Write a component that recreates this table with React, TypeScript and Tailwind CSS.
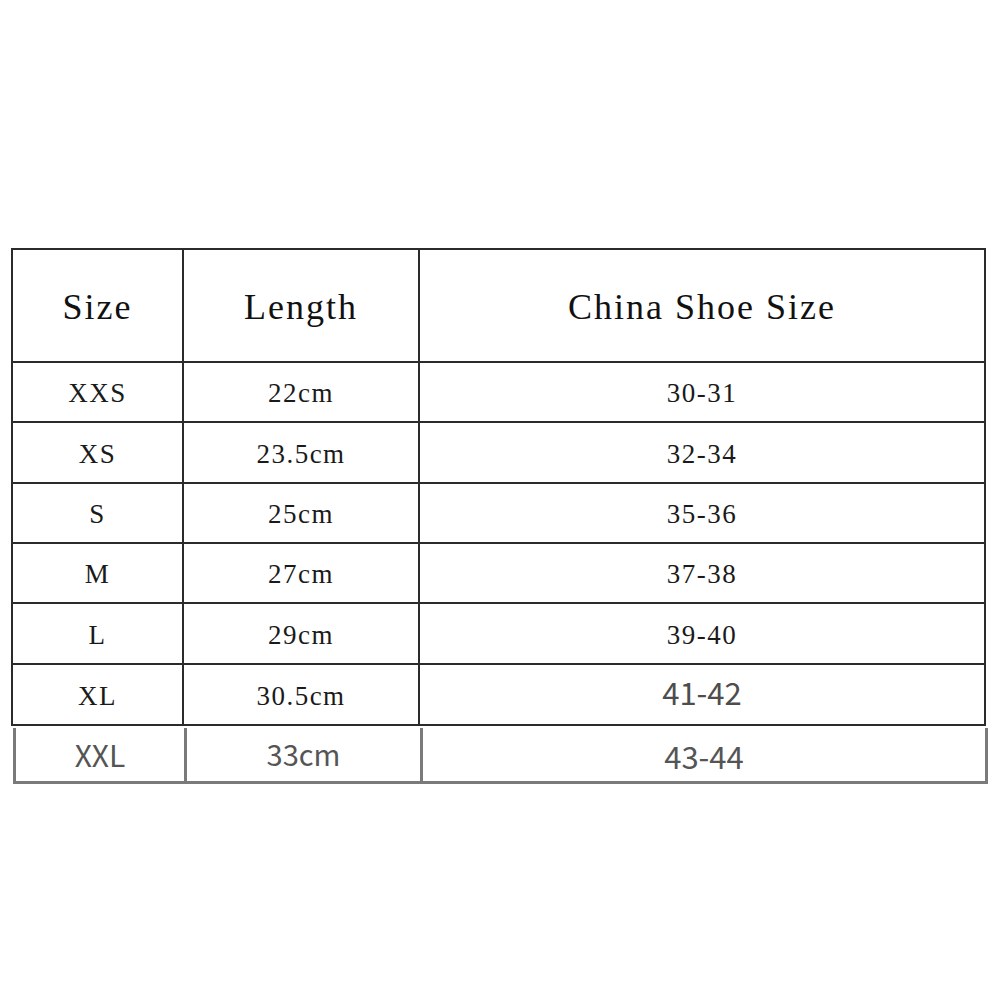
import React from 'react';

type Row = { size: string; length: string; shoe: string; shoeSans?: boolean };

const rows: Row[] = [
    { size: 'XXS', length: '22cm', shoe: '30-31' },
    { size: 'XS', length: '23.5cm', shoe: '32-34' },
    { size: 'S', length: '25cm', shoe: '35-36' },
    { size: 'M', length: '27cm', shoe: '37-38' },
    { size: 'L', length: '29cm', shoe: '39-40' },
    { size: 'XL', length: '30.5cm', shoe: '41-42', shoeSans: true },
];

const heights = ['h-[58px]', 'h-[59px]', 'h-[58px]', 'h-[58px]', 'h-[59px]', 'h-[59px]'];

const serif = "font-['Liberation_Serif','Times_New_Roman',serif]";
const sans = "font-['Noto_Sans_CJK_SC','Noto_Sans',sans-serif]";

export default function App() {
    return (
        <div className="w-[1001px] h-[1001px] bg-white pt-[248px] pl-[11px]">
            {/* main table, dark lines */}
            <div className="w-[975px] border-2 border-[#2b2b2b] flex flex-col">
                <div className={`flex h-[113px] border-b-2 border-[#2b2b2b] text-[36px] tracking-[2px] text-[#111] ${serif}`}>
                    <div className="w-[171px] border-r-2 border-[#2b2b2b] flex items-center justify-center pt-[3px]">Size</div>
                    <div className="w-[236px] border-r-2 border-[#2b2b2b] flex items-center justify-center pt-[3px]">Length</div>
                    <div className="flex-1 flex items-center justify-center pt-[3px]">China Shoe Size</div>
                </div>

                {rows.map((r, i) => (
                    <div
                        key={r.size}
                        className={`flex ${heights[i]} ${i < rows.length - 1 ? 'border-b-2 box-content' : ''} border-[#2b2b2b] text-[#1a1a1a]`}
                    >
                        <div className={`w-[171px] border-r-2 border-[#2b2b2b] flex items-center justify-center pt-[3px] text-[27px] tracking-[1.5px] ${serif}`}>
                            {r.size}
                        </div>
                        <div className={`w-[236px] border-r-2 border-[#2b2b2b] flex items-center justify-center pt-[3px] text-[27px] tracking-[1.5px] ${serif}`}>
                            {r.length}
                        </div>
                        {r.shoeSans ? (
                            <div className={`flex-1 flex items-center justify-center text-[31px] text-[#4d4d4d] pb-[4px] ${sans}`}>
                                {r.shoe}
                            </div>
                        ) : (
                            <div className={`flex-1 flex items-center justify-center pt-[3px] text-[27px] tracking-[1.5px] ${serif}`}>
                                {r.shoe}
                            </div>
                        )}
                    </div>
                ))}
            </div>

            {/* last row, grey lines */}
            <div className={`ml-[2px] mt-[2px] w-[975px] h-[56px] flex border-x-[3px] border-b-[3px] border-[#7a7a7a] text-[#555] ${sans}`}>
                <div className="w-[171px] border-r-[3px] border-[#7a7a7a] flex items-center justify-center text-[30px]">XXL</div>
                <div className="w-[236px] border-r-[3px] border-[#7a7a7a] flex items-center justify-center text-[29px] pb-[2px]">33cm</div>
                <div className="flex-1 flex items-center justify-center text-[31px] pt-[4px]">43-44</div>
            </div>
        </div>
    );
}
